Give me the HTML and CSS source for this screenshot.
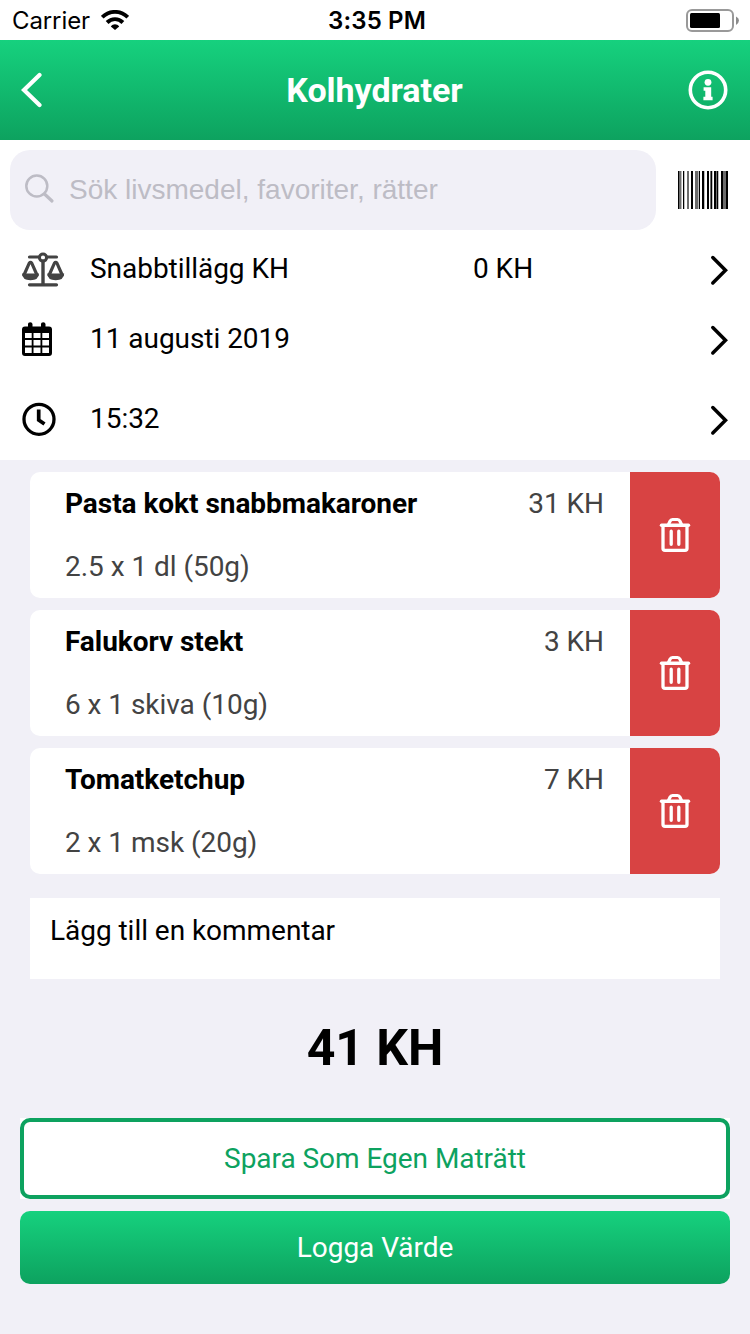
FILE: index.html
```html
<!DOCTYPE html>
<html lang="sv">
<head>
<meta charset="utf-8">
<title>Kolhydrater</title>
<link rel="stylesheet" href="styles.css">
</head>
<body>
<svg width="0" height="0" class="defs" aria-hidden="true">
  <symbol id="chevron" viewBox="0 0 20 32"><path d="M2.800 3.500L15.500 16.300L2.800 29" fill="none" stroke="currentColor" stroke-width="3.500" stroke-linecap="round"/></symbol>
  <symbol id="trash" viewBox="0 0 32 36"><g fill="none" stroke="currentColor" stroke-linecap="round" stroke-linejoin="round"><path d="M2.500 8.200H29.500" stroke-width="3.400"/><path d="M4 9V31.500Q4 33.300 6 33.300H26Q28 33.300 28 31.500V9" stroke-width="3.300"/><path d="M9.500 7.500L11 4.300Q11.700 2.500 13.500 2.500H18.500Q20.300 2.500 21 4.300L22.500 7.500" stroke-width="3.200"/><path d="M12.200 14.200V27.300M19.800 14.200V27.300" stroke-width="3.300"/></g></symbol>
</svg>
<div class="statusbar">
  <span class="carrier">Carrier</span>
  <svg class="wifi" width="28" height="20" viewBox="0 0 28 20"><g fill="none" stroke="#000" stroke-width="3.900"><path d="M1.200 7.200C8.500 .1 19.500 .1 26.800 7.200"/><path d="M6.100 12.500C10.600 8 17.400 8 21.900 12.500"/></g><path d="M9.800 16.400C12 13.400 16 13.400 18.200 16.400L14 20Z"/></svg>
  <span class="time">3:35 PM</span>
  <svg class="battery" width="54" height="24" viewBox="0 0 54 24"><rect x="1" y="1" width="46" height="21" rx="5" fill="#fff" stroke="#999" stroke-width="2"/><rect x="4" y="4" width="30" height="15" rx="1.500"/><path d="M50 7.500Q53 9 53 11.500T50 16Z" fill="#8b8b8b"/></svg>
</div>
<header class="header">
  <svg class="back" width="22" height="36" viewBox="0 0 22 36"><path d="M18.500 3L3 18L18.500 33" fill="none" stroke="#fff" stroke-width="4.200" stroke-linecap="round"/></svg>
  <h1 class="title">Kolhydrater</h1>
  <svg class="info" width="40" height="40" viewBox="0 0 40 40"><circle cx="20" cy="20" r="17.700" fill="none" stroke="#fff" stroke-width="3.600"/><circle cx="20" cy="12.300" r="3.400" fill="#fff"/><path d="M15.600 17.300H23.200V26.700H24.600V30.200H15.400V26.700H17.300V20.700H15.600Z" fill="#fff"/></svg>
</header>
<section class="searchrow">
  <div class="search">
    <svg width="30" height="30" viewBox="0 0 30 30"><g fill="none" stroke="#bdbcc5" stroke-linecap="round"><circle cx="11.800" cy="12" r="10.500" stroke-width="2.500"/><path d="M19.500 20L27 27" stroke-width="3.200"/></g></svg>
    <span class="placeholder">Sök livsmedel, favoriter, rätter</span>
  </div>
  <svg class="barcode" width="50" height="38" viewBox="0 0 50 38" shape-rendering="crispEdges"><path d="M0 0h1v38h-1zM5 0h1v38h-1zM13 0h2v38h-2zM21 0h1v38h-1zM24 0h2v38h-2zM29 0h2v38h-2zM33 0h1v38h-1zM36 0h2v38h-2zM39 0h1v38h-1zM43 0h2v38h-2zM48 0h2v38h-2z" fill="#000"/><path d="M1 0h2v38h-2zM9 0h2v38h-2zM17 0h3v38h-3zM32 0h1v38h-1zM38 0h1v38h-1zM45 0h3v38h-3z" fill="#6c6c6c"/><path d="M3 0h1v38h-1zM6 0h1v38h-1zM20 0h1v38h-1zM26 0h1v38h-1zM34 0h1v38h-1zM40 0h1v38h-1z" fill="#bbb"/></svg>
</section>
<section class="fields">
  <div class="field">
    <svg class="ficon" width="44" height="36" viewBox="0 0 44 36"><g fill="none" stroke="#434343" stroke-linecap="round"><path d="M7.500 5H17.500M24.500 5H34.500M7.500 32.800H34.500" stroke-width="3.200"/><path d="M21 9V32" stroke-width="3.400"/><circle cx="21" cy="5.600" r="3.600" stroke-width="3"/><path d="M2 23L7.200 11.200Q8.500 9.500 9.800 11.200L15 23M27.200 23L32.400 11.200Q33.700 9.500 35 11.200L40.200 23" stroke-width="3.200"/></g><path d="M0 21.500H17Q16.800 28.200 8.500 28.200T0 21.500ZM25.200 21.500H42.200Q42 28.200 33.700 28.200T25.200 21.500Z" fill="#434343"/></svg>
    <span class="label">Snabbtillägg KH</span><span class="amount">0 KH</span>
    <svg class="chev" width="20" height="32"><use href="#chevron"/></svg>
  </div>
  <div class="field tall">
    <svg class="ficon" width="44" height="36" viewBox="0 0 44 36"><path fill-rule="evenodd" d="M3 4.500H6V2Q6 .3 8.200 .3T10.500 2V4.500H19V2Q19 .3 21.200 .3T23.500 2V4.500H27Q30 4.500 30 7.500V31Q30 34 27 34H3Q0 34 0 31V7.500Q0 4.500 3 4.500ZM3 11V16H9.700V11ZM11.500 11V16H18.500V11ZM20.300 11V16H27V11ZM3 18V23.500H9.700V18ZM11.500 18V23.500H18.500V18ZM20.300 18V23.500H27V18ZM3 25.500V31H9.700V25.500ZM11.500 25.500V31H18.500V25.500ZM20.300 25.500V31H27V25.500Z"/></svg>
    <span class="label">11 augusti 2019</span>
    <svg class="chev" width="20" height="32"><use href="#chevron"/></svg>
  </div>
  <div class="field tall">
    <svg class="ficon" width="44" height="36" viewBox="0 0 44 36"><circle cx="17" cy="17.300" r="15" fill="none" stroke="#000" stroke-width="3.300"/><path d="M16.700 7.500V18L22.500 22" fill="none" stroke="#000" stroke-width="3.700"/></svg>
    <span class="label">15:32</span>
    <svg class="chev" width="20" height="32"><use href="#chevron"/></svg>
  </div>
</section>
<main class="meal">
  <article class="card">
    <div class="body"><div class="top"><h2 class="name">Pasta kokt snabbmakaroner</h2><span class="kh">31 KH</span></div><p class="portion">2.5 x 1 dl (50g)</p></div>
    <div class="delete"><svg width="32" height="36"><use href="#trash"/></svg></div>
  </article>
  <article class="card">
    <div class="body"><div class="top"><h2 class="name">Falukorv stekt</h2><span class="kh">3 KH</span></div><p class="portion">6 x 1 skiva (10g)</p></div>
    <div class="delete"><svg width="32" height="36"><use href="#trash"/></svg></div>
  </article>
  <article class="card">
    <div class="body"><div class="top"><h2 class="name">Tomatketchup</h2><span class="kh">7 KH</span></div><p class="portion">2 x 1 msk (20g)</p></div>
    <div class="delete"><svg width="32" height="36"><use href="#trash"/></svg></div>
  </article>
  <div class="comment">Lägg till en kommentar</div>
</main>
<div class="total">41 KH</div>
<footer class="actions">
  <div class="outline-wrap"><div class="btn outline">Spara Som Egen Maträtt</div></div>
  <div class="btn primary">Logga Värde</div>
</footer>
</body>
</html>
```
FILE: styles.css
```css
* { box-sizing: border-box; }
body { margin: 0; width: 750px; height: 1334px; overflow: hidden; background: #f1f0f7; font-family: Roboto, "Noto Sans", sans-serif; font-size: 28px; line-height: 34px; letter-spacing: -.04px; color: #000; }
h1, h2, p { margin: 0; }
svg { display: block; flex: none; }
.defs { position: absolute; }
.statusbar { display: grid; grid-template-columns: 89px 240px 1fr 54px; align-items: center; height: 40px; padding: 0 10px 0 12px; background: #fff; font-family: Inter, sans-serif; font-size: 24px; }
.carrier { letter-spacing: -.1px; white-space: nowrap; padding-top: 2px; }
.wifi { margin-top: -1px; }
.battery { margin-top: 1px; }
.time { font-weight: 600; letter-spacing: .15px; margin-left: -13px; padding-top: 2px; }
.header { display: flex; align-items: center; justify-content: space-between; height: 100px; padding: 0 22px 0 21px; background: linear-gradient(#16d17e, #0da25f); }
.back { margin-right: 18px; }
.title { font-size: 34px; line-height: 40px; font-weight: 700; color: #fff; }
.searchrow { display: flex; align-items: center; gap: 22px; height: 100px; padding: 0 22px 0 10px; background: #fff; }
.search { display: flex; align-items: center; gap: 14px; width: 646px; height: 80px; padding: 0 15px 3px; border-radius: 20px; background: #f1f0f7; }
.placeholder { font-family: "Liberation Sans", Arial, sans-serif; font-size: 28px; letter-spacing: 0; color: #bdbcc5; padding-top: 2px; }
.fields { background: #fff; }
.field { display: grid; grid-template-columns: 68px 383px 1fr 20px; align-items: center; height: 60px; padding: 0 20px 0 22px; }
.field.tall { height: 80px; }
.label, .amount { padding-bottom: 3px; }
.chev { grid-column: 4; }
.meal { padding: 12px 30px 0; }
.card { display: flex; height: 126px; margin-bottom: 12px; border-radius: 10px; overflow: hidden; background: #fff; }
.body { flex: 1; padding: 15px 26px 0 35px; }
.top { display: flex; justify-content: space-between; margin-bottom: 29px; }
.name { font-size: 28px; font-weight: 700; }
.kh, .portion { color: #434343; }
.delete { display: flex; align-items: center; justify-content: center; width: 90px; background: #d84343; color: #fff; }
.comment { height: 81px; margin-top: 24px; padding: 16px 20px; background: #fff; }
.total { height: 139px; padding-top: 39px; text-align: center; font-size: 50px; line-height: 60px; font-weight: 700; }
.actions { display: flex; flex-direction: column; gap: 12px; padding: 0 20px; }
.outline-wrap { background: #fff; }
.btn { display: flex; align-items: center; justify-content: center; border-radius: 10px; }
.outline { height: 81px; border: 4px solid #0da25f; color: #0da25f; }
.primary { height: 73px; background: linear-gradient(#16d17e, #0da25f); color: #fff; }
```
